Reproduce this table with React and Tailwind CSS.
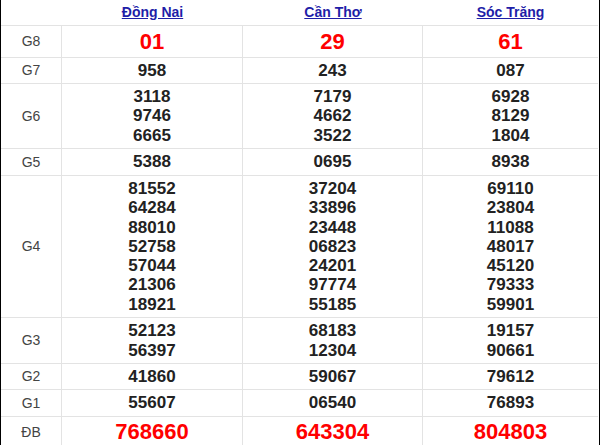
const provinces = ['Đồng Nai', 'Cần Thơ', 'Sóc Trăng'];

const rows = [
  { label: 'G8', h: 'h-[31px]', big: true, values: [['01'], ['29'], ['61']] },
  { label: 'G7', h: 'h-[25px]', values: [['958'], ['243'], ['087']] },
  {
    label: 'G6',
    h: 'h-[64px]',
    values: [
      ['3118', '9746', '6665'],
      ['7179', '4662', '3522'],
      ['6928', '8129', '1804'],
    ],
  },
  { label: 'G5', h: 'h-[26px]', values: [['5388'], ['0695'], ['8938']] },
  {
    label: 'G4',
    h: 'h-[141px]',
    values: [
      ['81552', '64284', '88010', '52758', '57044', '21306', '18921'],
      ['37204', '33896', '23448', '06823', '24201', '97774', '55185'],
      ['69110', '23804', '11088', '48017', '45120', '79333', '59901'],
    ],
  },
  {
    label: 'G3',
    h: 'h-[45px]',
    values: [
      ['52123', '56397'],
      ['68183', '12304'],
      ['19157', '90661'],
    ],
  },
  { label: 'G2', h: 'h-[25px]', values: [['41860'], ['59067'], ['79612']] },
  { label: 'G1', h: 'h-[26px]', values: [['55607'], ['06540'], ['76893']] },
  { label: 'ĐB', h: 'h-[30px]', big: true, values: [['768660'], ['643304'], ['804803']] },
];

const cols = 'grid grid-cols-[61px_181px_180px_175px]';

export default function App() {
  return (
    <div className="w-[600px] h-[445px] overflow-hidden bg-white border-l border-r border-black font-['Liberation_Sans',Arial,sans-serif]">
      <div className="mr-[1px]">
        {/* header */}
        <div className={`${cols} h-[26px] border-b border-[#e3e3e3]`}>
          <div />
          {provinces.map((p) => (
            <div key={p} className="flex items-center justify-center pb-[1px]">
              <a href="#" className="text-[14px] font-bold text-[#1e1ea8] underline">
                {p}
              </a>
            </div>
          ))}
        </div>

        {rows.map((row) => (
          <div key={row.label} className={`${cols} ${row.h} box-content border-b border-[#e3e3e3]`}>
            <div className="flex items-center justify-center border-r border-[#e3e3e3] text-[14px] text-[#444]">
              {row.label}
            </div>
            {row.values.map((nums, i) => (
              <div
                key={i}
                className={`flex flex-col items-center justify-center ${i < 2 ? 'border-r border-[#e3e3e3]' : ''}`}
              >
                {nums.map((n) =>
                  row.big ? (
                    <span key={n} className="text-[22px] leading-[24px] font-bold text-[#f00]">
                      {n}
                    </span>
                  ) : (
                    <span key={n} className="text-[17px] leading-[19.2px] font-bold text-[#222]">
                      {n}
                    </span>
                  )
                )}
              </div>
            ))}
          </div>
        ))}
      </div>
    </div>
  );
}
